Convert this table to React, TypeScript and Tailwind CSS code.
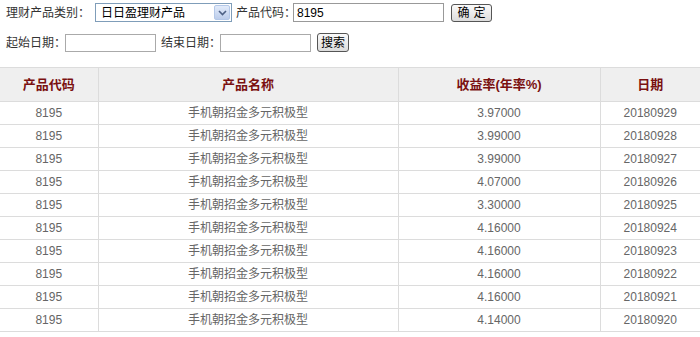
import React from 'react';

const rows = [
  { rate: '3.97000', date: '20180929' },
  { rate: '3.99000', date: '20180928' },
  { rate: '3.99000', date: '20180927' },
  { rate: '4.07000', date: '20180926' },
  { rate: '3.30000', date: '20180925' },
  { rate: '4.16000', date: '20180924' },
  { rate: '4.16000', date: '20180923' },
  { rate: '4.16000', date: '20180922' },
  { rate: '4.16000', date: '20180921' },
  { rate: '4.14000', date: '20180920' },
];

const font = "font-['Liberation_Sans','Noto_Sans_CJK_SC',sans-serif]";

const Btn: React.FC<{ children: React.ReactNode; className?: string }> = ({ children, className }) => (
  <div
    className={`flex shrink-0 items-center justify-center whitespace-nowrap rounded-[3px] border border-[#555] bg-gradient-to-b from-[#fafafa] to-[#dcdcdc] text-[12px] text-black ${className ?? ''}`}
  >
    {children}
  </div>
);

export default function App() {
  return (
    <div className={`w-[700px] h-[337px] overflow-hidden bg-white ${font}`}>
      <div className="pl-[6px] pt-[3px] text-[12px] text-[#333]">
        <div className="flex items-center h-[19px] whitespace-nowrap">
          <span className="w-[89px] shrink-0">理财产品类别：</span>
          <div className="flex h-[19px] w-[137px] shrink-0 items-center border border-[#7f9db9] bg-white">
            <span className="flex-1 pl-[5px] text-black">日日盈理财产品</span>
            <div className="mr-[1px] flex h-[15px] w-[16px] items-center justify-center rounded-[2px] border border-[#b4c8e8] bg-gradient-to-b from-[#e2ebfa] to-[#bccdeb]">
              <svg width="9" height="6" viewBox="0 0 9 6">
                <path d="M1 1 L4.5 4.5 L8 1" stroke="#4d6185" strokeWidth="1.6" fill="none" />
              </svg>
            </div>
          </div>
          <span className="ml-[4px] w-[57px] shrink-0">产品代码：</span>
          <div className="flex h-[19px] w-[151px] shrink-0 items-center border border-[#999] pl-[3px] text-black">8195</div>
          <Btn className="ml-[7px] h-[18px] w-[41px] tracking-[4px] pl-[4px]">确定</Btn>
        </div>
        <div className="mt-[11px] flex items-center h-[19px] whitespace-nowrap">
          <span className="w-[59px] shrink-0">起始日期：</span>
          <div className="h-[18px] w-[91px] shrink-0 border border-[#aaa]" />
          <span className="ml-[5px] w-[59px] shrink-0">结束日期：</span>
          <div className="h-[18px] w-[91px] shrink-0 border border-[#aaa]" />
          <Btn className="ml-[6px] h-[19px] w-[32px]">搜索</Btn>
        </div>
      </div>

      <table className="mt-[15px] w-[700px] table-fixed border-collapse text-center">
        <colgroup>
          <col className="w-[98px]" />
          <col className="w-[300px]" />
          <col className="w-[202px]" />
          <col className="w-[100px]" />
        </colgroup>
        <thead>
          <tr className="h-[34px] bg-[#efefef] text-[13px] font-bold text-[#7a1010]">
            <th className="border border-l-0 border-[#dcdcdc]">产品代码</th>
            <th className="border border-[#dcdcdc]">产品名称</th>
            <th className="border border-[#dcdcdc]">收益率(年率%)</th>
            <th className="border border-r-0 border-[#dcdcdc]">日期</th>
          </tr>
        </thead>
        <tbody className="text-[12px] text-[#666]">
          {rows.map((r, i) => (
            <tr key={i} className="h-[23px]">
              <td className="border border-l-0 border-[#dcdcdc]">8195</td>
              <td className="border border-[#dcdcdc]">手机朝招金多元积极型</td>
              <td className="border border-[#dcdcdc]">{r.rate}</td>
              <td className="border border-r-0 border-[#dcdcdc]">{r.date}</td>
            </tr>
          ))}
        </tbody>
      </table>
    </div>
  );
}
